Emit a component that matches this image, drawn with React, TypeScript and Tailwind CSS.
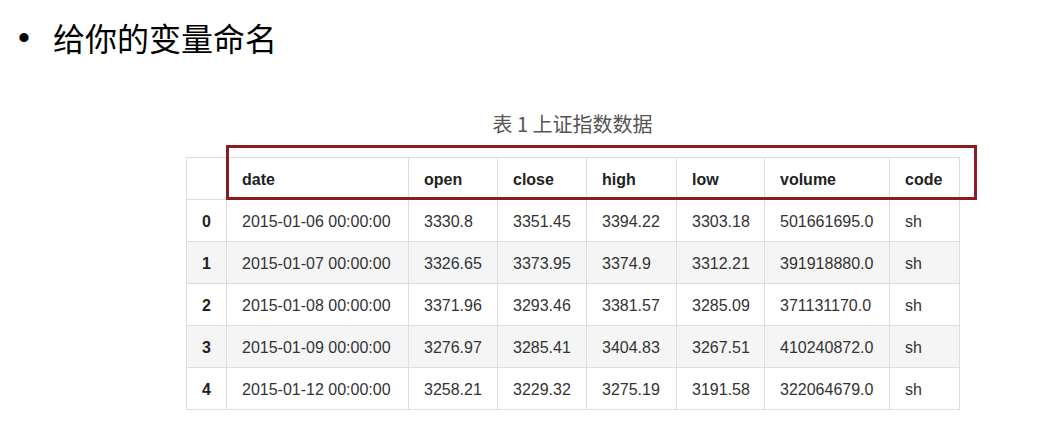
const columns = [
  { key: "idx", label: "", width: "w-[40px]" },
  { key: "date", label: "date", width: "w-[182px]" },
  { key: "open", label: "open", width: "w-[89px]" },
  { key: "close", label: "close", width: "w-[89px]" },
  { key: "high", label: "high", width: "w-[90px]" },
  { key: "low", label: "low", width: "w-[88px]" },
  { key: "volume", label: "volume", width: "w-[125px]" },
  { key: "code", label: "code", width: "w-[70px]" },
];

const rows = [
  ["0", "2015-01-06 00:00:00", "3330.8", "3351.45", "3394.22", "3303.18", "501661695.0", "sh"],
  ["1", "2015-01-07 00:00:00", "3326.65", "3373.95", "3374.9", "3312.21", "391918880.0", "sh"],
  ["2", "2015-01-08 00:00:00", "3371.96", "3293.46", "3381.57", "3285.09", "371131170.0", "sh"],
  ["3", "2015-01-09 00:00:00", "3276.97", "3285.41", "3404.83", "3267.51", "410240872.0", "sh"],
  ["4", "2015-01-12 00:00:00", "3258.21", "3229.32", "3275.19", "3191.58", "322064679.0", "sh"],
];

export default function App() {
  return (
    <div className="relative w-[1051px] h-[422px] bg-white overflow-hidden font-['Liberation_Sans','Noto_Sans_CJK_SC',sans-serif]">
      {/* slide bullet */}
      <div className="flex items-center pt-[15px] pl-[18px] h-[59px]">
        <span className="w-[35px] text-[34px] leading-none text-black">•</span>
        <span className="text-[32px] leading-[44px] text-black font-['Noto_Sans_CJK_SC',sans-serif]">
          给你的变量命名
        </span>
      </div>

      <div className="pt-[52px] pl-[186px]">
        <div className="w-[773px] text-center text-[20px] leading-[26px] text-[#555] font-['Noto_Sans_CJK_SC',sans-serif]">
          表 1 上证指数数据
        </div>

        <table className="mt-[20px] w-[773px] table-fixed border-collapse text-[16px] text-[#333]">
          <thead>
            <tr className="h-[42px]">
              {columns.map((c) => (
                <th
                  key={c.key}
                  className={`${c.width} border border-[#dddddd] pl-[15px] pt-[3px] text-left font-bold text-[#222]`}
                >
                  {c.label}
                </th>
              ))}
            </tr>
          </thead>
          <tbody>
            {rows.map((r, i) => (
              <tr key={r[0]} className={`h-[42px] ${i % 2 === 1 ? "bg-[#f5f5f5]" : "bg-white"}`}>
                {r.map((v, j) => (
                  <td
                    key={j}
                    className={`border border-[#dddddd] pt-[3px] ${
                      j === 0 ? "text-center font-bold text-[#222]" : "pl-[15px] text-left"
                    }`}
                  >
                    {v}
                  </td>
                ))}
              </tr>
            ))}
          </tbody>
        </table>
      </div>

      {/* highlight box over the header */}
      <div className="absolute left-[226px] top-[145px] w-[751px] h-[55px] border-[3px] border-[#8b1c22]" />
    </div>
  );
}
